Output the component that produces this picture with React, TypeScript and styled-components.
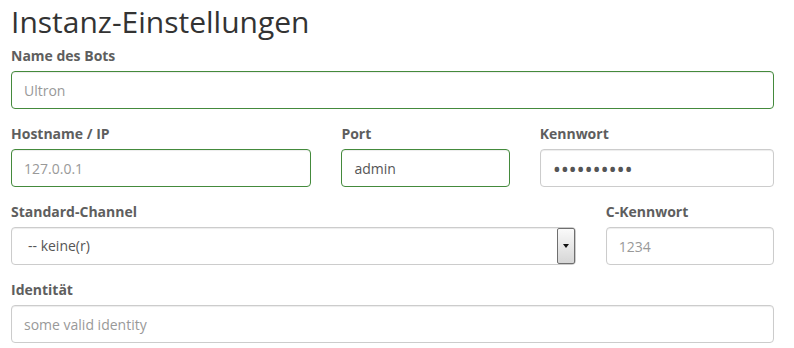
import React from "react";
import styled, { createGlobalStyle } from "styled-components";

const GlobalStyle = createGlobalStyle`
  html, body { margin: 0; padding: 0; background: #fff; }
  body {
    font-family: "Open Sans", "Liberation Sans", sans-serif;
    font-size: 14px;
    line-height: 20px;
    color: #333;
  }
  * { box-sizing: border-box; }
`;

const Page = styled.div`
  width: 763px;
  margin-left: 11px;
  padding-top: 5px;
`;

const Title = styled.h1`
  margin: 0 0 8px;
  font-size: 30px;
  line-height: 33px;
  font-weight: 400;
  color: #333;
`;

const Row = styled.div`
  display: flex;
  margin: 0 -15px;
`;

const Col = styled.div<{ $span: number }>`
  flex: 0 0 ${(p) => (p.$span / 12) * 100}%;
  max-width: ${(p) => (p.$span / 12) * 100}%;
  padding: 0 15px;
`;

const Group = styled.div`
  margin-bottom: 15px;
`;

const Label = styled.label`
  display: inline-block;
  margin-bottom: 5px;
  font-weight: 700;
  color: #5e5e5e;
`;

const Input = styled.input<{ $success?: boolean }>`
  display: block;
  width: 100%;
  height: 38px;
  padding: 6px 12px;
  font-family: inherit;
  font-size: 14px;
  line-height: 20px;
  color: #555;
  background: #fff;
  border: 1px solid ${(p) => (p.$success ? "#448a3c" : "#ccc")};
  border-radius: 4px;
  box-shadow: inset 0 1px 1px rgba(0, 0, 0, 0.075);
  outline: none;
  &::placeholder { color: #999; opacity: 1; }
  &[type="password"] {
    font-size: 22px;
    line-height: 24px;
    letter-spacing: -0.3px;
    padding-top: 4px;
    padding-bottom: 4px;
  }
`;

const SelectBox = styled.div`
  display: flex;
  align-items: center;
  height: 38px;
  padding: 0 0 0 16px;
  border: 1px solid #ccc;
  border-radius: 4px;
  box-shadow: inset 0 1px 1px rgba(0, 0, 0, 0.075);
  color: #555;
  font-size: 14px;
`;

const SelectText = styled.span`
  flex: 1;
`;

const SelectButton = styled.span`
  display: flex;
  align-items: center;
  justify-content: center;
  width: 18px;
  height: 36px;
  border: 1px solid #6f6f6f;
  border-radius: 2px;
  background: linear-gradient(#fafafa, #d6d6d6);
`;

const Arrow = styled.span`
  width: 0;
  height: 0;
  border-left: 3px solid transparent;
  border-right: 3px solid transparent;
  border-top: 4px solid #111;
`;

export default function App() {
  return (
    <>
      <GlobalStyle />
      <Page>
        <Title>Instanz-Einstellungen</Title>
        <Group>
          <Label>Name des Bots</Label>
          <Input $success placeholder="Ultron" />
        </Group>
        <Row>
          <Col $span={5}>
            <Group>
              <Label>Hostname / IP</Label>
              <Input $success placeholder="127.0.0.1" />
            </Group>
          </Col>
          <Col $span={3}>
            <Group>
              <Label>Port</Label>
              <Input $success defaultValue="admin" />
            </Group>
          </Col>
          <Col $span={4}>
            <Group>
              <Label>Kennwort</Label>
              <Input type="password" defaultValue="xxxxxxxxxx" />
            </Group>
          </Col>
        </Row>
        <Row>
          <Col $span={9}>
            <Group>
              <Label>Standard-Channel</Label>
              <SelectBox>
                <SelectText>-- keine(r)</SelectText>
                <SelectButton>
                  <Arrow />
                </SelectButton>
              </SelectBox>
            </Group>
          </Col>
          <Col $span={3}>
            <Group>
              <Label>C-Kennwort</Label>
              <Input placeholder="1234" />
            </Group>
          </Col>
        </Row>
        <Group>
          <Label>Identität</Label>
          <Input placeholder="some valid identity" />
        </Group>
      </Page>
    </>
  );
}
